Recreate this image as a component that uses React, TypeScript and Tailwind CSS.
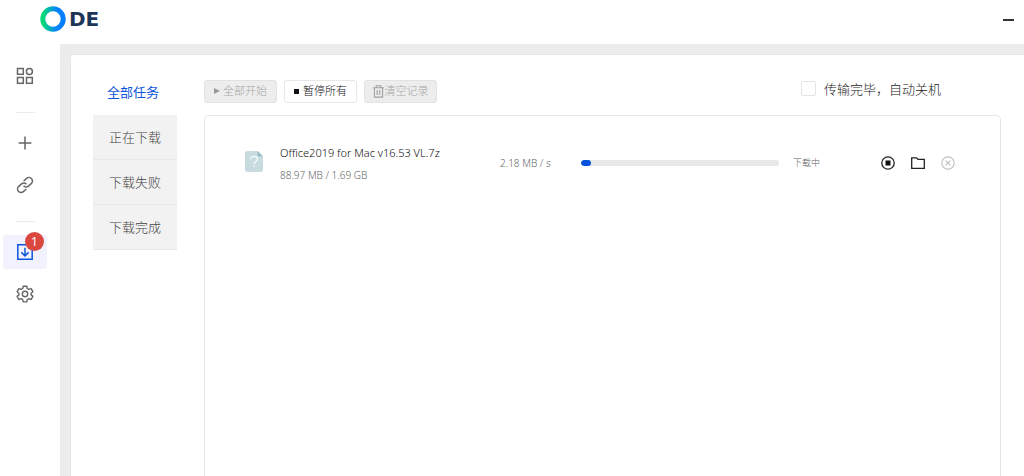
import type { ReactNode } from "react";
import clsx from "clsx";

const filters = ["全部任务", "正在下载", "下载失败", "下载完成"];

const tasks = [
  {
    name: "Office2019 for Mac v16.53 VL.7z",
    done: 88.97,
    total: 1730.56,
    size: "88.97 MB / 1.69 GB",
    speed: "2.18 MB / s",
    status: "下载中",
  },
];

function Header() {
  return (
    <header className="flex h-11 items-center justify-between pr-[10px] pl-10">
      <a href="#" aria-label="ODE" className="flex h-11 items-center gap-[3px] pb-[6px]">
        <svg width="26" height="26" viewBox="0 0 26 26" fill="none">
          <defs>
            <linearGradient id="ring" x1="0" y1="0" x2="1" y2="0">
              <stop offset="0.05" stopColor="#08d87c" />
              <stop offset="0.65" stopColor="#0585fb" />
              <stop offset="1" stopColor="#057dff" />
            </linearGradient>
          </defs>
          <circle cx="13" cy="13" r="10.2" stroke="url(#ring)" strokeWidth="5" />
        </svg>
        <span className="font-['DejaVu_Sans',sans-serif] text-[20px] leading-6 font-bold text-[#1f3558]">DE</span>
      </a>
      <button type="button" aria-label="最小化" className="flex h-6 w-[11px] items-center pb-1">
        <span className="h-[2px] w-full bg-[#333]" />
      </button>
    </header>
  );
}

function NavButton({ label, active, badge, children }: { label: string; active?: boolean; badge?: number; children: ReactNode }) {
  return (
    <button
      type="button"
      aria-label={label}
      className={clsx(
        "relative flex h-[34px] w-11 shrink-0 items-center justify-center rounded-[3px]",
        active ? "bg-[#f2f2fe] text-[#0c55dc]" : "text-[#666]"
      )}
    >
      <svg width="18" height="18" viewBox="0 0 18 18" fill="none" stroke="currentColor" strokeWidth="1.5">
        {children}
      </svg>
      {badge && (
        <span className="absolute -top-[3px] right-[3px] flex size-[19px] items-center justify-center rounded-full bg-[#d9473f] text-[12px] leading-none text-white">
          {badge}
        </span>
      )}
    </button>
  );
}

function Divider() {
  return <div className="mt-[19px] mb-[13px] h-px w-[19px] shrink-0 bg-[#ebebeb]" />;
}

function Sidebar() {
  return (
    <nav className="flex w-[50px] shrink-0 flex-col items-center pt-[15px]">
      <NavButton label="应用">
        <rect x="1.5" y="1.5" width="5.8" height="5.8" />
        <circle cx="13.4" cy="4.4" r="3" />
        <rect x="1.5" y="10.500" width="5.8" height="5.8" />
        <rect x="10.500" y="10.500" width="5.8" height="5.8" />
      </NavButton>
      <Divider />
      <NavButton label="新建任务">
        <path d="M9 2.6v12.8M2.6 9h12.8" />
      </NavButton>
      <div className="h-2" />
      <NavButton label="链接">
        <g transform="rotate(-41 9 9)">
          <path d="M8 12.5H4A3.5 3.5 0 0 1 4 5.500h3.700A3.500 3.500 0 0 1 11.200 9" transform="translate(-.6 .4)" />
          <path d="M10 5.500h4a3.500 3.500 0 0 1 0 7h-3.700A3.500 3.500 0 0 1 6.800 9" transform="translate(.6 -.4)" />
        </g>
      </NavButton>
      <Divider />
      <NavButton label="下载" active badge={1}>
        <path d="M1.800 1.800h14.400v14.400H1.800zM9 4.800v8M5.400 9.400 9 13l3.600-3.600" />
      </NavButton>
      <div className="h-2" />
      <NavButton label="设置">
        <path
          d="M7.200 1.200h3.600l.5 2.300 1.500.9 2.300-.8 1.800 3.100-1.800 1.500v1.700l1.800 1.500-1.800 3.100-2.300-.8-1.500.9-.5 2.300H7.200l-.5-2.300-1.500-.9-2.300.8-1.800-3.100 1.800-1.500V8.200L1.100 6.700l1.800-3.100 2.300.8 1.500-.9z"
          strokeWidth="1.400"
          strokeLinejoin="round"
        />
        <circle cx="9" cy="9" r="2.700" strokeWidth="1.400" />
      </NavButton>
    </nav>
  );
}

function FilterTabs() {
  return (
    <div className="flex w-[84px] shrink-0 flex-col">
      {filters.map((label, i) => (
        <button
          key={label}
          type="button"
          className={clsx(
            "text-[13px] leading-5",
            i === 0
              ? "h-[45px] pr-1 pb-[2px] text-[#0c55dc]"
              : "h-[45px] border-b border-[#e8e8e8] bg-[#f2f2f2] font-light text-[#444]"
          )}
        >
          {label}
        </button>
      ))}
    </div>
  );
}

const toolButton = "flex h-[23px] w-[73px] items-center justify-center rounded-[3px] border text-[11px] font-light";
const toolDisabled = "border-[#e2e2e2] bg-[#ededed] text-[#a6a6a6]";

function Toolbar() {
  return (
    <div className="flex h-[45px] items-center justify-between pr-[60px]">
      <div className="flex gap-[7px] pb-[3px]">
        <button type="button" disabled className={clsx(toolButton, toolDisabled, "gap-[3px]")}>
          <svg width="6" height="6" viewBox="0 0 6 6" fill="#999">
            <path d="M0 0l6 3-6 3z" />
          </svg>
          全部开始
        </button>
        <button type="button" className={clsx(toolButton, "gap-1 border-[#e8e8e8] bg-white text-[#111]")}>
          <span className="size-[5px] bg-[#111]" />
          暂停所有
        </button>
        <button type="button" disabled className={clsx(toolButton, toolDisabled, "gap-px")}>
          <svg width="11" height="13" viewBox="0 0 11 13" fill="none" stroke="#a0a0a0" strokeWidth="1.100">
            <path d="M0 2.700h11M3.200 2.500V.8h4.600v1.700M1.400 2.700v9.400h8.200V2.700M4.200 5v5M6.800 5v5" />
          </svg>
          清空记录
        </button>
      </div>
      <label className="flex items-center gap-2 pb-2 text-[13px] leading-5 font-light text-[#222]">
        <input type="checkbox" className="size-[15px] appearance-none rounded-[2px] border border-[#e4e4e4] checked:bg-[#0c55dc]" />
        传输完毕，自动关机
      </label>
    </div>
  );
}

function FileIcon() {
  return (
    <svg width="18" height="21" viewBox="0 0 18 21" className="shrink-0">
      <path d="M2.500 0H12.500L18 5.200V18.500A2.500 2.500 0 0 1 15.500 21h-13A2.500 2.500 0 0 1 0 18.500v-16A2.500 2.500 0 0 1 2.500 0z" fill="#c8dcdf" />
      <path d="M12.500 0 18 5.200h-4a1.500 1.500 0 0 1-1.500-1.500z" fill="#97bcc9" />
      <path d="M5.800 8.300c0-4 6.600-4 6.600-.2 0 2.400-3.200 2.500-3.200 5" fill="none" stroke="#fff" strokeWidth="1.100" />
      <circle cx="9.200" cy="15.200" r=".8" fill="#fff" />
    </svg>
  );
}

function TaskRow({ task }: { task: (typeof tasks)[number] }) {
  return (
    <li className="flex items-center pr-[45px] pl-10 text-[10px] leading-3 font-light text-[#666]">
      <div className="flex w-[255px] shrink-0 items-center gap-[17px]">
        <div className="pb-1">
          <FileIcon />
        </div>
        <div>
          <div className="text-[11px] leading-4 text-[#111]">{task.name}</div>
          <div className="mt-2">{task.size}</div>
        </div>
      </div>
      <div className="w-[81px] shrink-0">{task.speed}</div>
      <div className="h-[6px] min-w-10 flex-1 overflow-hidden rounded-full bg-[#e8e8e8]">
        <div className="h-full rounded-full bg-[#0453dc]" style={{ width: `${(task.done / task.total) * 100}%` }} />
      </div>
      <div className="w-[102px] shrink-0 pl-[14px] text-[9px]">{task.status}</div>
      <div className="flex shrink-0 items-center gap-4">
        <button type="button" aria-label="停止">
          <svg width="14" height="14" viewBox="0 0 14 14" fill="none">
            <circle cx="7" cy="7" r="6.200" stroke="#222" strokeWidth="1.300" />
            <rect x="4.500" y="4.500" width="5" height="5" fill="#111" />
          </svg>
        </button>
        <button type="button" aria-label="打开文件夹">
          <svg width="14" height="14" viewBox="0 0 14 14" fill="none" stroke="#222" strokeWidth="1.300">
            <path d="M.7 1.800h4.800l1.500 1.600h6.300v8.900H.7z" />
          </svg>
        </button>
        <button type="button" aria-label="删除">
          <svg width="14" height="14" viewBox="0 0 14 14" fill="none" stroke="#c2c2c2" strokeWidth="1.200">
            <circle cx="7" cy="7" r="6.200" />
            <path d="M4.600 4.600l4.800 4.800M9.400 4.600 4.600 9.400" />
          </svg>
        </button>
      </div>
    </li>
  );
}

export default function App() {
  return (
    <div className="flex min-h-screen flex-col bg-white font-['Noto_Sans','Noto_Sans_CJK_SC',sans-serif]">
      <Header />
      <div className="flex flex-1">
        <Sidebar />
        <main className="ml-[10px] flex flex-1 bg-[#ececec] pt-[10px] pl-[10px]">
          <div className="flex flex-1 gap-[27px] rounded-tl-[4px] border-t border-l border-[#e6e6e6] bg-white pt-[15px] pr-[23px] pl-[22px]">
            <FilterTabs />
            <section className="flex flex-1 flex-col">
              <Toolbar />
              <ul className="flex-1 rounded-t-[5px] border border-b-0 border-[#e6e6e6] pt-[29px]">
                {tasks.map((task) => (
                  <TaskRow key={task.name} task={task} />
                ))}
              </ul>
            </section>
          </div>
        </main>
      </div>
    </div>
  );
}
